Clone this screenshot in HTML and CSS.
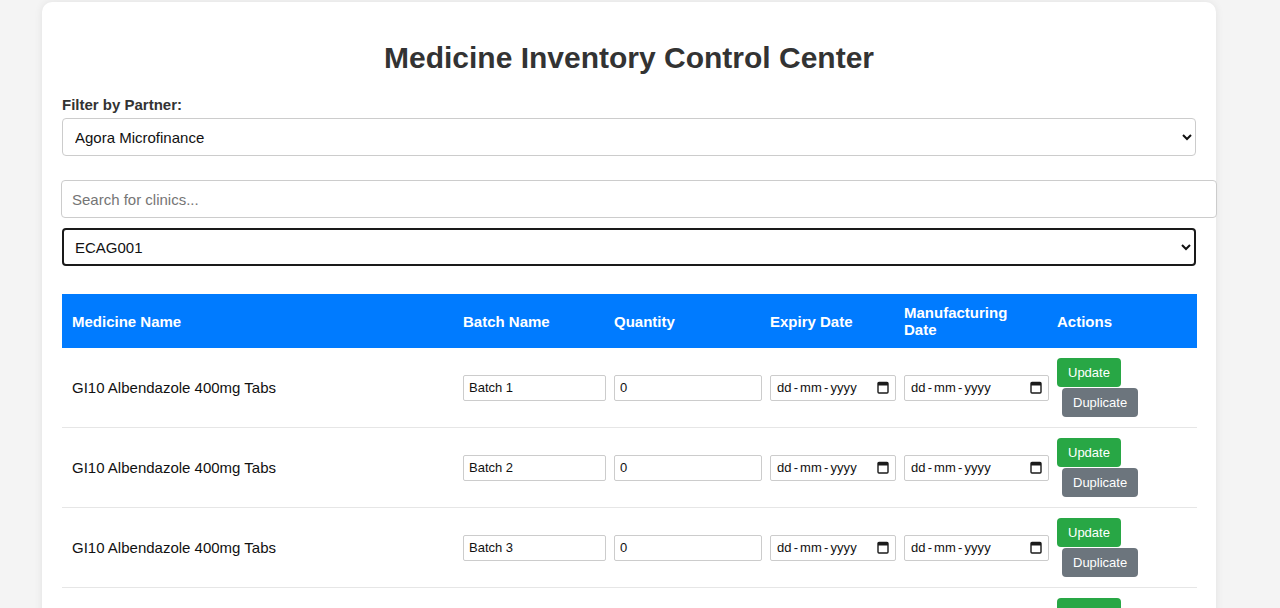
FILE: index.html
```html
<!DOCTYPE html>
<html lang="en">
<head>
<meta charset="utf-8">
<title>Medicine Inventory Control Center</title>
<link rel="stylesheet" href="styles.css">
</head>
<body>
<div class="container">
  <h1 class="title">Medicine Inventory Control Center</h1>
  <label class="field-label" for="partner">Filter by Partner:</label>
  <select id="partner" class="select">
    <option>Agora Microfinance</option>
  </select>
  <input class="search" type="text" placeholder="Search for clinics...">
  <select class="select select-focused">
    <option>ECAG001</option>
  </select>

  <table class="inventory">
    <colgroup>
      <col class="c-name"><col class="c-batch"><col class="c-qty"><col class="c-exp"><col class="c-mfg"><col class="c-act">
    </colgroup>
    <thead>
      <tr>
        <th>Medicine Name</th>
        <th>Batch Name</th>
        <th>Quantity</th>
        <th>Expiry Date</th>
        <th>Manufacturing Date</th>
        <th>Actions</th>
      </tr>
    </thead>
    <tbody>
      <tr>
        <td>GI10 Albendazole 400mg Tabs</td>
        <td><input class="cell-input" type="text" value="Batch 1"></td>
        <td><input class="cell-input" type="text" value="0"></td>
        <td><div class="date-input"><span class="date-text">dd<span class="sep">-</span>mm<span class="sep">-</span>yyyy</span><svg class="cal" width="12" height="13" viewBox="0 0 12 13"><rect x="1" y="1.5" width="10" height="10.5" rx="1" fill="none" stroke="#1a1a1a" stroke-width="1.4"/><rect x="1" y="1.5" width="10" height="3" fill="#1a1a1a"/></svg></div></td>
        <td><div class="date-input"><span class="date-text">dd<span class="sep">-</span>mm<span class="sep">-</span>yyyy</span><svg class="cal" width="12" height="13" viewBox="0 0 12 13"><rect x="1" y="1.5" width="10" height="10.5" rx="1" fill="none" stroke="#1a1a1a" stroke-width="1.4"/><rect x="1" y="1.5" width="10" height="3" fill="#1a1a1a"/></svg></div></td>
        <td><button class="btn btn-update">Update</button><button class="btn btn-dup">Duplicate</button></td>
      </tr>
      <tr>
        <td>GI10 Albendazole 400mg Tabs</td>
        <td><input class="cell-input" type="text" value="Batch 2"></td>
        <td><input class="cell-input" type="text" value="0"></td>
        <td><div class="date-input"><span class="date-text">dd<span class="sep">-</span>mm<span class="sep">-</span>yyyy</span><svg class="cal" width="12" height="13" viewBox="0 0 12 13"><rect x="1" y="1.5" width="10" height="10.5" rx="1" fill="none" stroke="#1a1a1a" stroke-width="1.4"/><rect x="1" y="1.5" width="10" height="3" fill="#1a1a1a"/></svg></div></td>
        <td><div class="date-input"><span class="date-text">dd<span class="sep">-</span>mm<span class="sep">-</span>yyyy</span><svg class="cal" width="12" height="13" viewBox="0 0 12 13"><rect x="1" y="1.5" width="10" height="10.5" rx="1" fill="none" stroke="#1a1a1a" stroke-width="1.4"/><rect x="1" y="1.5" width="10" height="3" fill="#1a1a1a"/></svg></div></td>
        <td><button class="btn btn-update">Update</button><button class="btn btn-dup">Duplicate</button></td>
      </tr>
      <tr>
        <td>GI10 Albendazole 400mg Tabs</td>
        <td><input class="cell-input" type="text" value="Batch 3"></td>
        <td><input class="cell-input" type="text" value="0"></td>
        <td><div class="date-input"><span class="date-text">dd<span class="sep">-</span>mm<span class="sep">-</span>yyyy</span><svg class="cal" width="12" height="13" viewBox="0 0 12 13"><rect x="1" y="1.5" width="10" height="10.5" rx="1" fill="none" stroke="#1a1a1a" stroke-width="1.4"/><rect x="1" y="1.5" width="10" height="3" fill="#1a1a1a"/></svg></div></td>
        <td><div class="date-input"><span class="date-text">dd<span class="sep">-</span>mm<span class="sep">-</span>yyyy</span><svg class="cal" width="12" height="13" viewBox="0 0 12 13"><rect x="1" y="1.5" width="10" height="10.5" rx="1" fill="none" stroke="#1a1a1a" stroke-width="1.4"/><rect x="1" y="1.5" width="10" height="3" fill="#1a1a1a"/></svg></div></td>
        <td><button class="btn btn-update">Update</button><button class="btn btn-dup">Duplicate</button></td>
      </tr>
      <tr>
        <td>GI10 Albendazole 400mg Tabs</td>
        <td><input class="cell-input" type="text" value="Batch 4"></td>
        <td><input class="cell-input" type="text" value="0"></td>
        <td><div class="date-input"><span class="date-text">dd<span class="sep">-</span>mm<span class="sep">-</span>yyyy</span><svg class="cal" width="12" height="13" viewBox="0 0 12 13"><rect x="1" y="1.5" width="10" height="10.5" rx="1" fill="none" stroke="#1a1a1a" stroke-width="1.4"/><rect x="1" y="1.5" width="10" height="3" fill="#1a1a1a"/></svg></div></td>
        <td><div class="date-input"><span class="date-text">dd<span class="sep">-</span>mm<span class="sep">-</span>yyyy</span><svg class="cal" width="12" height="13" viewBox="0 0 12 13"><rect x="1" y="1.5" width="10" height="10.5" rx="1" fill="none" stroke="#1a1a1a" stroke-width="1.4"/><rect x="1" y="1.5" width="10" height="3" fill="#1a1a1a"/></svg></div></td>
        <td><button class="btn btn-update">Update</button><button class="btn btn-dup">Duplicate</button></td>
      </tr>
    </tbody>
  </table>
</div>
</body>
</html>
```
FILE: styles.css
```css
html, body {
  margin: 0;
  padding: 0;
  background: #f4f4f4;
  font-family: "Liberation Sans", Arial, sans-serif;
  font-size: 15px;
  color: #222;
}

.container {
  width: 1174px;
  box-sizing: border-box;
  margin: 2px 0 0 42px;
  padding: 20px 20px 40px;
  background: #fff;
  border-radius: 10px;
  box-shadow: 0 0 8px rgba(0, 0, 0, 0.08);
}

.title {
  margin: 19px 0 21px;
  text-align: center;
  font-size: 30px;
  line-height: 34px;
  font-weight: bold;
  color: #333;
}

.field-label {
  display: block;
  margin-bottom: 5px;
  font-weight: bold;
  font-size: 15px;
  line-height: 17px;
  color: #333;
}

.select {
  display: block;
  width: 100%;
  box-sizing: border-box;
  height: 38px;
  padding: 0 8px;
  font-family: "Liberation Sans", Arial, sans-serif;
  font-size: 15px;
  color: #111;
  background: #fff;
  border: 1px solid #ccc;
  border-radius: 4px;
}

.select-focused {
  border: 2px solid #1a1a1a;
  padding: 0 7px;
}

.search {
  display: block;
  width: 100%;
  height: 16px;
  margin: 24px 0 10px -1px;
  padding: 10px;
  font-family: "Liberation Sans", Arial, sans-serif;
  font-size: 15px;
  color: #111;
  border: 1px solid #ccc;
  border-radius: 4px;
}

.search::placeholder {
  color: #757575;
}

.inventory {
  width: 100%;
  margin-top: 28px;
  border-collapse: collapse;
  table-layout: fixed;
}

.c-name { width: 391px; }
.c-batch { width: 151px; }
.c-qty { width: 156px; }
.c-exp { width: 134px; }
.c-mfg { width: 153px; }
.c-act { width: 150px; }

.inventory th {
  background: #007bff;
  color: #fff;
  text-align: left;
  font-weight: bold;
  font-size: 15px;
  line-height: 17px;
  padding: 10px;
  vertical-align: middle;
}

.inventory td {
  padding: 10px;
  border-bottom: 1px solid #e6e6e6;
  vertical-align: middle;
  font-size: 15px;
  color: #111;
}

.cell-input {
  display: block;
  width: 100%;
  height: 14px;
  padding: 5px;
  margin: 0;
  font-family: "Liberation Sans", Arial, sans-serif;
  font-size: 13px;
  line-height: 14px;
  color: #111;
  border: 1px solid #ccc;
  border-radius: 2px;
  background: #fff;
}

.date-input {
  display: flex;
  align-items: center;
  justify-content: space-between;
  box-sizing: content-box;
  width: calc(100% - 2px);
  height: 14px;
  padding: 5px 6px;
  border: 1px solid #ccc;
  border-radius: 2px;
  background: #fff;
  font-size: 13px;
  line-height: 14px;
  color: #111;
}

.date-text {
  white-space: nowrap;
  letter-spacing: 0.1px;
}

.sep {
  margin: 0 2px;
}

.cal {
  flex: none;
  display: block;
}

.btn {
  display: inline-block;
  vertical-align: top;
  padding: 7px 11px;
  margin: 0;
  border: none;
  border-radius: 4px;
  font-family: "Liberation Sans", Arial, sans-serif;
  font-size: 13px;
  line-height: 15px;
  color: #fff;
  cursor: pointer;
}

.btn-update {
  background: #28a745;
  margin-bottom: 1px;
}

.btn-dup {
  background: #6c757d;
  margin-left: 5px;
}
```
